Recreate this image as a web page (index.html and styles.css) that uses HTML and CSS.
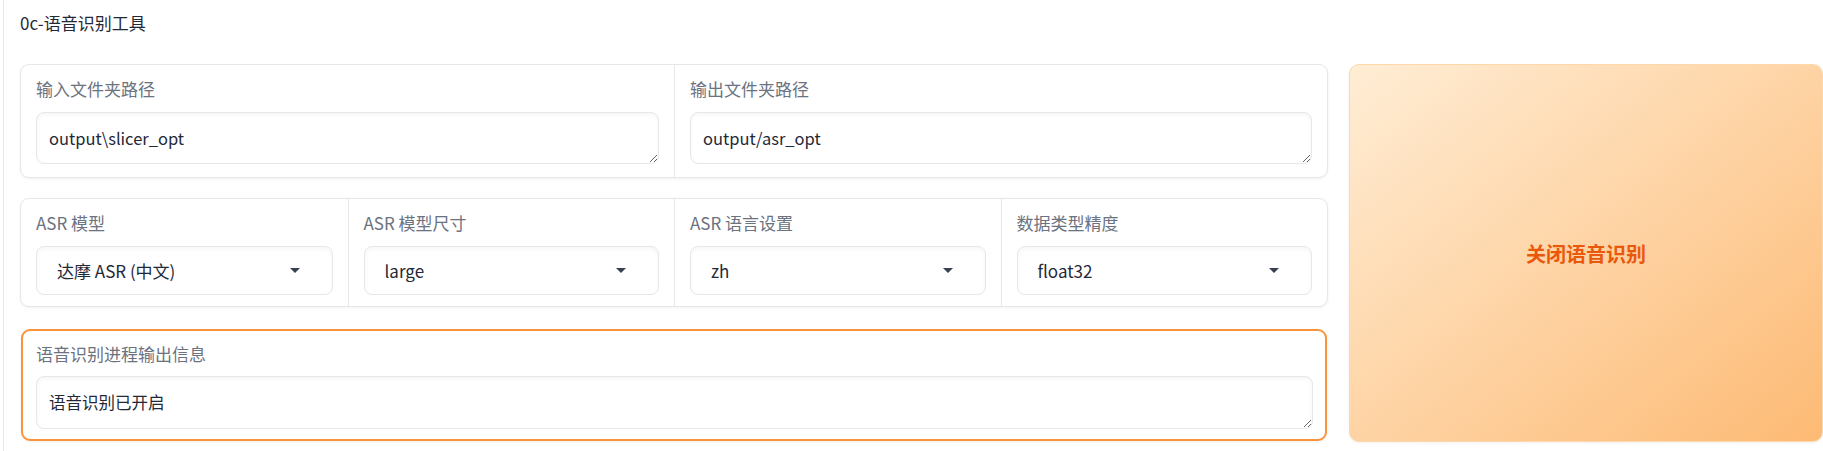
FILE: index.html
```html
<!DOCTYPE html>
<html lang="zh">
<head>
    <meta charset="UTF-8">
    <meta name="viewport" content="width=device-width, initial-scale=1.0">
    <title>0c-语音识别工具</title>
    <link rel="stylesheet" href="styles.css">
</head>
<body>

    <!-- ASR tab -->
    <div class="tab-panel">
        <div class="tab-title">0c-语音识别工具</div>

        <div class="tab-row">
            <div class="col-left">

                <!-- folders -->
                <div class="block grid-2">
                    <div class="field">
                        <label class="field-label" for="asrIn">输入文件夹路径</label>
                        <textarea class="text-input" id="asrIn" rows="1">output\slicer_opt</textarea>
                    </div>
                    <div class="field">
                        <label class="field-label" for="asrOut">输出文件夹路径</label>
                        <textarea class="text-input" id="asrOut" rows="1">output/asr_opt</textarea>
                    </div>
                </div>

                <!-- model options -->
                <div class="block grid-4">
                    <div class="field field-select">
                        <span class="field-label">ASR 模型</span>
                        <div class="select-box">
                            <span>达摩 ASR (中文)</span>
                            <svg class="select-arrow" width="10" height="5" viewBox="0 0 10 5"><path d="M0 0h10L5 5z" fill="#374151"/></svg>
                        </div>
                    </div>
                    <div class="field field-select">
                        <span class="field-label">ASR 模型尺寸</span>
                        <div class="select-box">
                            <span>large</span>
                            <svg class="select-arrow" width="10" height="5" viewBox="0 0 10 5"><path d="M0 0h10L5 5z" fill="#374151"/></svg>
                        </div>
                    </div>
                    <div class="field field-select">
                        <span class="field-label">ASR 语言设置</span>
                        <div class="select-box">
                            <span>zh</span>
                            <svg class="select-arrow" width="10" height="5" viewBox="0 0 10 5"><path d="M0 0h10L5 5z" fill="#374151"/></svg>
                        </div>
                    </div>
                    <div class="field field-select">
                        <span class="field-label">数据类型精度</span>
                        <div class="select-box">
                            <span>float32</span>
                            <svg class="select-arrow" width="10" height="5" viewBox="0 0 10 5"><path d="M0 0h10L5 5z" fill="#374151"/></svg>
                        </div>
                    </div>
                </div>

                <!-- process output -->
                <div class="block block-active">
                    <label class="field-label" for="asrInfo">语音识别进程输出信息</label>
                    <textarea class="text-input text-input-tall" id="asrInfo" rows="1">语音识别已开启</textarea>
                </div>

            </div>

            <button class="btn-primary" type="button">关闭语音识别</button>
        </div>
    </div>

</body>
</html>
```

FILE: styles.css
```css
* {
    box-sizing: border-box;
}

body {
    margin: 0;
    width: 1823px;
    height: 451px;
    overflow: hidden;
    background: #ffffff;
    color: #1f2937;
    font-family: "Noto Sans CJK SC", sans-serif;
}

/* Tab panel */
.tab-panel {
    margin-left: 3px;
    height: 451px;
    padding-left: 16px;
    border-left: 1px solid #e5e7eb;
}

.tab-title {
    padding-top: 12px;
    font-size: 17px;
    line-height: 22px;
    color: #1f2937;
}

.tab-row {
    display: flex;
    gap: 21px;
    margin-top: 30px;
    height: 378px;
}

.col-left {
    width: 1308px;
    flex-shrink: 0;
    display: flex;
    flex-direction: column;
    gap: 20px;
}

/* Blocks */
.block {
    background: #ffffff;
    border: 1px solid #e5e7eb;
    border-radius: 9px;
    box-shadow: 0 1px 3px rgba(0, 0, 0, 0.06);
}

.grid-2 {
    display: grid;
    grid-template-columns: 1fr 1fr;
}

.grid-4 {
    display: grid;
    grid-template-columns: repeat(4, 1fr);
}

.field {
    padding: 13px 15px;
}

.field + .field {
    border-left: 1px solid #e5e7eb;
}

.field-select {
    padding-bottom: 11px;
}

.block-active {
    margin-top: 2px;
    margin-left: 1px;
    margin-right: 1px;
    padding: 12px 12px 10px 13px;
    border: 2px solid #fb923c;
}

.field-label {
    display: block;
    margin-bottom: 12px;
    font-size: 17px;
    line-height: 22px;
    color: #6b7280;
}

.block-active .field-label {
    margin-bottom: 11px;
}

/* Inputs */
.text-input {
    display: block;
    width: 100%;
    height: 52px;
    padding: 13px 12px;
    border: 1px solid #e5e7eb;
    border-radius: 8px;
    background: #ffffff;
    box-shadow: inset 0 2px 4px rgba(0, 0, 0, 0.04);
    color: #1f2937;
    font-family: "Noto Sans CJK SC", sans-serif;
    font-size: 16.5px;
    line-height: 24px;
    resize: vertical;
    overflow: hidden;
    outline: none;
}

.text-input-tall {
    height: 53px;
}

.select-box {
    display: flex;
    align-items: center;
    justify-content: space-between;
    height: 49px;
    padding: 0 32px 0 20px;
    border: 1px solid #e5e7eb;
    border-radius: 8px;
    background: #ffffff;
    box-shadow: inset 0 2px 4px rgba(0, 0, 0, 0.04);
    font-size: 17px;
    color: #1f2937;
}

/* Button */
.btn-primary {
    flex: 1;
    border: 1px solid #fed7aa;
    border-radius: 10px;
    background: linear-gradient(to bottom right, #ffedd5, #fdba74);
    box-shadow: 0 1px 3px rgba(0, 0, 0, 0.06);
    color: #ea580c;
    font-family: "Noto Sans CJK SC", sans-serif;
    font-size: 20px;
    font-weight: bold;
    cursor: pointer;
}
```
